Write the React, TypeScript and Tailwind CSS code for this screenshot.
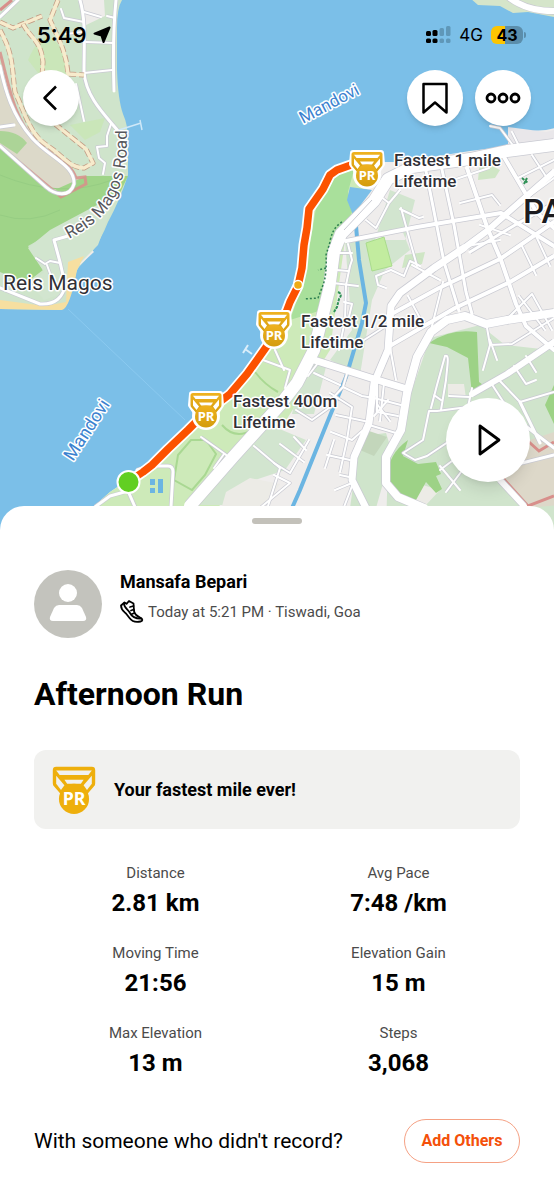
import React from "react";

type Road = { d: string; w: number };

const ROADS: Road[] = [
  // Reis Magos side
  { d: "M80 0 C86 20 84 45 84 72 C86 98 106 116 119 132", w: 3 },
  { d: "M116 0 C113 30 113 60 114 91", w: 3 },
  { d: "M84 73 L112 70", w: 2 },
  { d: "M84 12 L101 17 M84 22 L64 18 L61 9", w: 2 },
  { d: "M86 42 L113 43 M107 16 L115 18 M82 32 L66 34", w: 2 },
  { d: "M76 84 L84 121", w: 2 },
  { d: "M111 124 L107 136 L107 146 L97 147 L99 158 L105 163 L103 174", w: 2 },
  { d: "M68 236 L54 240 L60 262 L65 284 C64 297 55 305 40 304 L0 288", w: 3 },
  { d: "M36 258 L45 264 L50 261 L60 263 M47 265 L52 279", w: 2 },
  { d: "M0 66 C5 90 12 115 32 138 C50 158 75 165 74 184 C70 198 55 195 46 187 L0 146", w: 3 },
  { d: "M0 127 L14 125 M0 17 L18 0", w: 3 },
  // north shore
  { d: "M505 -6 C520 8 538 12 560 11", w: 6 },
  // waterfront
  { d: "M554 145 L507 151 L470 159 L412 167 L388 179 L374 201 L341 234 L334 252 L329 290 L314 350 L297 383 L280 405 L233 457 L190 506", w: 12 },
  { d: "M464 248 L434 268 L400 293 L391 306 L388 350 L374 383 L369 423 L354 457 L352 480 L366 508", w: 7 },
  { d: "M554 313 L507 320 L486 324 L465 316 L447 320 L431 332 L417 357 L407 393 L401 430 L386 457 L386 483 L398 497 L424 508", w: 8 },
  { d: "M314 360 L374 379 L407 389", w: 7 },
  { d: "M554 342 L507 374 L472 394", w: 6 },
  { d: "M472 388 L468 407 L437 411 L429 411 L423 440 L403 453 L415 460 L427 456 L448 442", w: 2 },
  { d: "M346 241 L417 227 L501 213 L554 246", w: 4 },
  { d: "M467 168 L487 227 L501 260 L516 304 L526 326 L554 350", w: 4 },
  { d: "M504 157 L537 213 L554 228", w: 4 },
  { d: "M554 172 L487 231 L464 248", w: 6 },
  { d: "M554 203 L515 225 L470 252", w: 3 },
  { d: "M554 222 L500 259 L439 288 L388 316", w: 4 },
  { d: "M554 256 L510 282 L455 308 L388 347", w: 4 },
  { d: "M425 166 L444 262 L459 311", w: 3 },
  { d: "M441 165 L454 225 L466 292 L472 314", w: 3 },
  { d: "M532 155 L547 178 M518 178 L554 160 M528 197 L554 178", w: 2 },
  { d: "M453 180 L489 168 M460 203 L492 195 L500 205", w: 2 },
  { d: "M401 208 L407 230 L417 266 M400 209 L419 218 L423 217", w: 2 },
  { d: "M366 220 L376 228 L389 203 L376 193 M389 203 L400 190", w: 2 },
  { d: "M348 244 L352 260 L350 266 L346 285 L345 320 L339 350", w: 2 },
  { d: "M338 253 L352 253 M336 270 L348 271 M333 283 L358 286 M344 302 L352 304 L347 325", w: 2 },
  { d: "M378 285 L376 276 L391 270 L404 276 L410 261 L420 266 M378 285 L386 288", w: 2 },
  { d: "M408 296 L421 320 M390 347 L396 380 M364 340 L389 324", w: 2 },
  { d: "M412 265 L440 280 M480 225 L510 235 M462 247 L500 240 M443 282 L431 330", w: 2 },
  { d: "M521 244 L536 275 M536 236 L550 266 M519 296 L545 330 M506 320 L532 294 L552 330", w: 2 },
  { d: "M486 322 L490 345 L483 370 M490 345 L512 344 L554 318 M497 360 L490 340", w: 2 },
  { d: "M445 356 C450 354 447 366 446 380 L441 410 M445 356 L437 385 L431 408 M434 395 L441 400", w: 2 },
  { d: "M449 396 L470 397 M499 380 L520 402 L554 392", w: 2 },
  { d: "M514 366 L526 384 L536 380 M526 356 L536 372 M491 383 L506 406", w: 2 },
  { d: "M520 402 L540 443 M505 410 L554 448 M518 464 L554 455", w: 3 },
  { d: "M500 480 L524 506", w: 6 },
  { d: "M440 466 L460 490 M460 455 L440 470 M470 460 L446 492", w: 2 },
  { d: "M348 370 L343 387 L362 396 L374 398 M343 387 L331 400 M314 373 L340 385 M318 363 L308 376", w: 2 },
  { d: "M377 383 L377 412 L398 416 M374 398 L401 405 M384 383 L380 421 M369 425 L396 433", w: 2 },
  { d: "M374 416 L388 400 M377 404 L390 421 M330 393 L352 407 L347 440", w: 2 },
  { d: "M296 410 L312 420 L333 405 M336 415 L369 422 M331 432 L352 440 L362 431", w: 2 },
  { d: "M274 463 L290 473 L309 440 M294 437 L306 450 M280 444 L304 462", w: 2 },
  { d: "M325 468 L334 440 M340 472 L347 440 M327 455 L350 460", w: 2 },
  { d: "M274 475 L290 483 L260 508 M340 475 L354 478 M335 490 L352 483 M344 507 L352 486", w: 2 },
  { d: "M201 437 L225 454 L232 460 M224 454 L214 468", w: 2 },
  { d: "M254 446 L280 468 L268 506", w: 2 },
  { d: "M95 507 L110 496 L128 491 L135 507 M137 470 L150 466 H168 Q173 466 173 472 L171 507", w: 3 },
  { d: "M263 360 L290 370 L285 388 M275 350 L284 370", w: 2 },
  { d: "M512 132 L519 146 M490 126 L500 128 L512 144", w: 2 },
];

const DASHED = [
  "M0 22 L13 28 L42 16",
  "M23 24 C30 38 41 40 43 62 L42 78",
  "M58 0 L50 20 C58 38 66 50 68 74 L84 75",
  "M0 30 C14 55 12 70 15 92 C26 115 30 135 48 146 C63 156 70 168 84 168 L93 163 L86 149 L50 120",
];

const ROUTE =
  "M367 164 L351 165 L337 170 L330 175 L323 189 L309 209 L307 228 L304 245 L302 268 L298 286 L290 302 L284 318 L274 336 L262 353 L247 374 L230 394 L204 414 L188 430 L168 449 L152 465 L143 472 L128 482";

function Medal({ x, y }: { x: number; y: number }) {
  return (
    <g transform={`translate(${x} ${y})`}>
      <g stroke="#fff" strokeWidth="6" strokeLinejoin="round" fill="#fff">
        <path d="M-14 -15 H14 L15 -4 L9 5 H-9 L-15 -4 Z" />
        <circle cx="0" cy="7" r="11" />
      </g>
      <MedalShape />
    </g>
  );
}

function MedalShape({ flat = false }: { flat?: boolean }) {
  const fill = flat ? "#eeaf0c" : "url(#gold)";
  const inner = flat ? "#f1f1ef" : "#fff";
  return (
    <>
      <path
        fill={fill}
        d="M-13 -16 H13 Q15.500 -16 15.500 -13.500 V-4 Q15.500 -2.500 14.500 -1.500 L8 6 H-8 L-14.500 -1.500 Q-15.500 -2.500 -15.500 -4 V-13.500 Q-15.500 -16 -13 -16 Z"
      />
      <g fill={inner}>
        <path d="M-13 -13.300 H13 L10.500 -10 H-10.500 Z" />
        <path d="M-13 -9.500 L-7 -2.500 L-9.500 1 L-13 -3.500 Z" />
        <path d="M13 -9.500 L7 -2.500 L9.500 1 L13 -3.500 Z" />
        <path d="M-7 -6.500 H7 L5 -3.500 H-5 Z" />
      </g>
      <circle cx="0" cy="7.500" r="11" fill={fill} />
      <text
        x="0"
        y="12"
        textAnchor="middle"
        fontSize="13"
        fontWeight="700"
        fill="#fff"
        fontFamily="'Noto Sans', sans-serif"
      >
        PR
      </text>
    </>
  );
}

function MapLabel({ x, y, title }: { x: number; y: number; title: string }) {
  return (
    <text
      x={x}
      y={y}
      fontSize="17"
      fontWeight="500"
      fill="#303036"
      stroke="#fff"
      strokeWidth="3"
      strokeLinejoin="round"
      paintOrder="stroke"
    >
      {title}
      <tspan x={x} dy="21">
        Lifetime
      </tspan>
    </text>
  );
}

function ActivityMap() {
  return (
    <svg
      viewBox="0 0 554 530"
      preserveAspectRatio="xMidYMin slice"
      className="absolute inset-0 size-full font-['Roboto',sans-serif]"
      role="img"
      aria-label="Map of the run along the Mandovi"
    >
      <defs>
        <linearGradient id="gold" x1="0" y1="0" x2="0" y2="1">
          <stop offset="0" stopColor="#efb21f" />
          <stop offset="1" stopColor="#d39c0c" />
        </linearGradient>
        <path id="reisRoad" d="M69 239 C100 223 128 200 127 137 L127 100" />
        <clipPath id="eastLand">
          <path d="M560 127 L546 130 L514 132 L509 146 L470 151 L400 162 L350 162 L336 167 L325 182 L309 200 L304 212 L300 268 L288 300 L272 335 L250 366 L225 392 L204 410 L150 464 L128 480 L110 492 L92 508 L92 530 H560 Z" />
        </clipPath>
      </defs>
      <rect width="554" height="530" fill="#7bbfe8" />

      <path d="M68 309 L185 420" stroke="#8bcaf0" strokeWidth="1" />

      <path
        d="M0 0 H122 Q117 8 117 28 V70 Q118 100 123 114 Q128 125 128 140 V175 Q120 200 108 222 Q98 248 79 267 L73 277 Q69 303 60 310 L0 309 Z"
        fill="#cfe4cb"
      />
      <path d="M80 0 H104 L105 16 L84 26 Z M78 260 L88 245 L94 252 L80 265 Z" fill="#eeecea" />
      <path d="M28 60 Q45 20 62 50 L70 74 L56 96 Z M70 125 L105 118 L100 132 L85 140 Z" fill="#c6e8ad" opacity=".6" />
      <path d="M0 66 L10 100 Q30 138 60 158 Q80 170 76 190 L60 195 L0 146 Z" fill="#dcd9c9" />
      <path d="M0 131 Q18 131 27 143 L17 154 L0 143 Z" fill="#acd497" />
      <path
        d="M0 147 L50 192 L86 176 H128 L118 197 L66 225 L28 246 L43 270 L26 283 L0 272 Z"
        fill="#9fd488"
      />
      <path d="M0 175 Q60 200 112 180 M0 215 Q30 225 60 210" stroke="#96cd83" strokeWidth="1" fill="none" />
      <path d="M50 230 L95 206 L116 196 L98 245 L78 265 L72 290 L44 300 L30 285 L44 272 L28 248 Z" fill="#d2e5cf" />
      <path d="M0 300 L45 306 L66 302 L68 262 L84 256 L77 270 Q70 308 62 310 L0 309 Z" fill="#f6dfa0" />
      <path
        d="M0 52 C10 90 14 118 36 142 C58 160 72 164 76 178 L85 177 L86 184 L61 197 L0 146"
        fill="none"
        stroke="#d88f8b"
        strokeWidth="3"
        opacity=".85"
      />
      <path d="M0 10 L12 0" stroke="#d88f8b" strokeWidth="3" />

      <path d="M470 -2 L478 5 L500 6 L513 13 L528 12 L554 17 V-2 Z" fill="#d5e5ca" />

      <g clipPath="url(#eastLand)">
        <rect x="80" y="120" width="474" height="410" fill="#efedec" />
        <path
          d="M380 160 L340 160 L320 180 L295 215 L290 300 L80 500 V530 H200 L280 430 L330 350 L345 240 Z"
          fill="#cdeab9"
        />
        <path d="M355 166 L340 165 L318 196 L304 280 L290 320 L322 310 L330 262 L352 212 L348 192 Z" fill="#a9e09b" />
        <path d="M372 190 L350 187 L347 200 L353 215 Z" fill="#7bbfe8" />
        <path
          d="M345 240 L352 330 L330 360 L360 375 L372 300 L385 270 L410 250 L402 230 Z M390 190 L415 200 L405 240 L375 240 Z"
          fill="#d2e5cf"
        />
        <path d="M366 243 L384 237 L392 266 L372 271 Z" fill="#c2ec9f" stroke="#a9db8c" />
        <path d="M304 362 L326 367 L314 414 L292 414 Z M240 458 L270 425 L306 440 L285 470 L255 480 L230 505 H200 Z" fill="#d2e5cf" />
        <path d="M222 506 L226 492 L250 478 L280 484 L262 508 Z" fill="#ecebe6" />
        <path d="M362 436 L386 433 L392 452 L376 508 H350 L356 465 Z" fill="#cfe4cb" />
        <path d="M360 450 L366 430 L387 437 L374 456 Z" fill="#c3d6bb" />
        <path
          d="M430 338 L480 325 L505 345 L550 350 H560 V530 H386 L388 460 L402 432 L412 390 Z"
          fill="#d0e4cc"
        />
        <path d="M448 384 H464 L466 398 L448 396 Z M405 480 L440 490 L425 506 L400 500 Z" fill="#ecebe6" />
        <path d="M500 480 L530 440 L560 430 V505 L525 508 Z" fill="#ddd8c9" />
        <path
          d="M429 343 Q450 328 477 332 L479 382 L486 387 L472 394 L468 358 L447 347 Z M408 440 L403 456 L418 464 L436 462 L441 474 L436 476 L442 489 L436 493 L426 482 L416 500 L400 497 L389 486 Q383 458 408 440 Z M554 385 L545 405 L554 424 Z"
          fill="#9dd286"
        />
        <path d="M480 160 L500 170 L495 178 L478 180 Z M405 255 L425 252 L422 264 L402 268 Z" fill="#cfe6c5" />
        <path
          d="M191 440 L206 440 L216 454 L205 475 L192 490 L174 480 L178 455 Z"
          fill="none"
          stroke="#a9d892"
          strokeWidth="2"
        />
        <path d="M222 425 Q235 440 252 430 M255 372 Q265 385 278 392" fill="none" stroke="#a9d892" strokeWidth="2" />
        <path d="M510 425 L539 451 L554 442 M500 475 L528 506 L554 496" fill="none" stroke="#d88f8b" strokeWidth="3" />
      </g>
      <path d="M508 127 L546 132 L554 130 V145 L508 148 Z" fill="#e9e7ea" />
      <path
        d="M356 226 L359 260 L366 303 L362 323 L346 377 L327 423 L300 490 L292 508"
        fill="none"
        stroke="#6bb5e2"
        strokeWidth="4"
      />
      <path d="M150 479 H155 V485 H150 Z M150 488 H155 V493 H150 Z M158 479 H163 V493 H158 Z" fill="#6bb5e2" />

      <g fill="none" strokeLinejoin="round">
        {ROADS.map((r, i) => (
          <path key={i} d={r.d} stroke="#c9cad2" strokeWidth={r.w + 1.4} />
        ))}
        {ROADS.map((r, i) => (
          <path key={i} d={r.d} stroke="#fff" strokeWidth={r.w} strokeLinecap="round" />
        ))}
        {DASHED.map((d) => (
          <g key={d}>
            <path d={d} stroke="#c39c85" strokeWidth="5" strokeDasharray="7 3" />
            <path d={d} stroke="#f7ebcc" strokeWidth="3.500" />
          </g>
        ))}
        <path d="M119 130 L141 123 M140 120 L142 130" stroke="#cfe8f8" strokeWidth="1.500" />
        <path d="M252 354 L245 349 M243 353 L248 345" stroke="#dbeefa" strokeWidth="2" />
        <path d="M372 200 L344 230" stroke="#c9cad2" strokeWidth="1" />
        <path
          d="M342 222 Q332 228 330 242 L326 255 Q327 275 323 285 L318 298 L304 299 M326 268 L318 270"
          stroke="#2f8051"
          strokeWidth="1.500"
          strokeDasharray="2 2"
        />
        <path d="M338 292 Q343 294 339 299 L337 307 L334 312 M522 178 L528 183 M524 184 L527 178" stroke="#2f9156" strokeWidth="2" strokeDasharray="3 1" />
      </g>

      <g fill="none" strokeLinejoin="round" strokeLinecap="round">
        <path d={ROUTE} stroke="#fff" strokeWidth="11" />
        <path d={ROUTE} stroke="#fc5200" strokeWidth="7.500" />
      </g>
      <circle cx="298" cy="285" r="4.500" fill="#f0ab12" stroke="#fff" strokeWidth="1.500" />
      <circle cx="128.500" cy="482" r="11" fill="#62cf22" stroke="#fff" strokeWidth="2" />

      <g stroke="#fff" strokeWidth="3" strokeLinejoin="round" paintOrder="stroke">
        <text fontSize="17" fill="#57575d">
          <textPath href="#reisRoad">Reis Magos Road</textPath>
        </text>
        <text x="3" y="290" fontSize="21" fill="#303036">Reis Magos</text>
        <text x="523" y="223" fontSize="33" fontWeight="500" fill="#1b1b1f">PA</text>
        <text transform="translate(303 124) rotate(-28)" fontSize="17" fill="#3b82cf">Mandovi</text>
        <text transform="translate(73 462) rotate(-57)" fontSize="18" fill="#3b82cf">Mandovi</text>
      </g>

      <Medal x={367} y={168} />
      <Medal x={274} y={328} />
      <Medal x={206} y={409} />
      <MapLabel x={394} y={166} title="Fastest 1 mile" />
      <MapLabel x={301} y={327} title="Fastest 1/2 mile" />
      <MapLabel x={233} y={407} title="Fastest 400m" />
    </svg>
  );
}

function StatusBar() {
  return (
    <div className="flex h-[70px] items-center justify-between pr-7 pl-[37px] font-['Inter',sans-serif] text-black">
      <div className="flex items-center gap-1.5">
        <span className="text-[22px] leading-7 font-semibold">5:49</span>
        <svg width="18" height="18" viewBox="0 0 18 18" aria-hidden="true">
          <path d="M16.500 1.500 L10.500 16 L8.500 9.500 L1.500 7.600 Z" stroke="#000" strokeWidth="2" strokeLinejoin="round" />
        </svg>
      </div>
      <div className="flex items-center gap-2">
        <svg width="25" height="18" viewBox="0 0 25 18" aria-hidden="true">
          <g>
            <rect x="0" y="5" width="5" height="5" rx="1.500" />
            <rect x="6.500" y="4" width="5" height="6" rx="1.500" />
            <rect x="0" y="12.500" width="5" height="4.500" rx="1.500" />
            <rect x="6.500" y="12.500" width="5" height="4.500" rx="1.500" />
          </g>
          <g fill="#5f97b8">
            <rect x="13.500" y="2" width="4.500" height="8" rx="1.500" />
            <rect x="20" y="0" width="4.500" height="10" rx="1.500" />
            <rect x="13.500" y="12.500" width="4.500" height="4.500" rx="1.500" />
            <rect x="20" y="12.500" width="4.500" height="4.500" rx="1.500" />
          </g>
        </svg>
        <span className="text-[17px] leading-6">4G</span>
        <div className="flex items-center">
          <div className="flex h-[18px] w-8 items-center justify-center rounded-md bg-linear-to-r from-[#fdc500] from-45% to-[#5b8eac] to-45% text-[16px] leading-none font-bold">
            43
          </div>
          <div className="ml-px h-1.5 w-0.5 rounded-r bg-[#5b8eac]" />
        </div>
      </div>
    </div>
  );
}

const ROUND = "flex size-14 items-center justify-center rounded-full bg-white shadow-md";

function MapControls() {
  return (
    <div className="flex items-center justify-between px-[23px]">
      <button type="button" aria-label="Back" className={ROUND}>
        <svg width="26" height="28" viewBox="0 0 26 28" fill="none" stroke="#000" strokeWidth="2.500">
          <path d="M18 2.500 L6.500 14 L18 25.500" strokeLinejoin="round" />
        </svg>
      </button>
      <div className="flex gap-3">
        <button type="button" aria-label="Save" className={ROUND}>
          <svg width="28" height="34" viewBox="0 0 28 34" fill="none" stroke="#000" strokeWidth="2.500" strokeLinejoin="round">
            <path d="M2.500 3 H25.500 V31.500 L14 21.500 L2.500 31.500 Z" />
          </svg>
        </button>
        <button type="button" aria-label="More" className={ROUND}>
          <svg width="36" height="14" viewBox="0 0 36 14" fill="none" stroke="#000" strokeWidth="2.800">
            <circle cx="6" cy="7" r="4" />
            <circle cx="18" cy="7" r="4" />
            <circle cx="30" cy="7" r="4" />
          </svg>
        </button>
      </div>
    </div>
  );
}

function ShoeIcon() {
  return (
    <svg width="24" height="24" viewBox="0 0 24 24" fill="none" stroke="#000" strokeWidth="1.800" strokeLinejoin="round" strokeLinecap="round" aria-hidden="true">
      <path d="M1 5.500 L4.500 2.500 L6.500 3.800 L9 1 L13.500 3.500 L14 11 C14.500 14 17 16 20 17.500 C23 19 23 21 20.500 21.500 C16 22.500 12 21.500 9.500 18 L6 13.500 C4 11.500 1 10 1 5.500 Z" />
      <path d="M4 3.500 C4 8 8 9.500 10 13 C12 17 15 18.800 21.500 18.500 M13.500 6 L10 7 M13.800 9.500 L11 10.500 M14.500 13 L12 14" />
    </svg>
  );
}

const STATS = [
  ["Distance", "2.81 km"],
  ["Avg Pace", "7:48 /km"],
  ["Moving Time", "21:56"],
  ["Elevation Gain", "15 m"],
  ["Max Elevation", "13 m"],
  ["Steps", "3,068"],
];

export default function App() {
  return (
    <div className="min-h-screen bg-white font-['Roboto',sans-serif] text-black">
      <header className="relative h-[530px] overflow-hidden">
        <ActivityMap />
        <div className="relative flex h-full flex-col">
          <StatusBar />
          <MapControls />
          <div className="mt-auto flex justify-end pr-6 pb-12">
            <button type="button" aria-label="Play route" className="flex size-[84px] items-center justify-center rounded-full bg-white shadow-lg">
              <svg width="28" height="34" viewBox="0 0 28 34" fill="none" stroke="#000" strokeWidth="2.800" strokeLinejoin="round">
                <path d="M6 3 L25 17 L6 31 Z" />
              </svg>
            </button>
          </div>
        </div>
      </header>

      <main className="relative -mt-6 rounded-t-3xl bg-white px-[34px] pt-3 pb-9">
        <div className="mx-auto h-1.5 w-[50px] rounded-full bg-[#c3c1ba]" />

        <section className="mt-[46px] flex items-center gap-[18px]">
          <svg width="68" height="68" viewBox="0 0 68 68" role="img" aria-label="Mansafa Bepari">
            <circle cx="34" cy="34" r="34" fill="#c3c3bd" />
            <circle cx="34" cy="23" r="9" fill="#fff" />
            <path d="M25 35 H43 Q46 35 48 38 L52 47 Q53 51 49 51 H19 Q15 51 16 47 L20 38 Q22 35 25 35 Z" fill="#fff" />
          </svg>
          <div className="flex h-[68px] flex-1 flex-col">
            <h2 className="text-[18px] leading-6 font-bold">Mansafa Bepari</h2>
            <p className="mt-1 flex items-center gap-1 text-[15px] leading-7 text-[#4b4b4b]">
              <ShoeIcon />
              Today at 5:21 PM · Tiswadi, Goa
            </p>
          </div>
        </section>

        <h1 className="mt-9 text-[32px] leading-10 font-bold">Afternoon Run</h1>

        <section className="mt-9 flex h-[79px] items-center gap-4 rounded-xl bg-[#f1f1ef] px-4">
          <svg width="48" height="52" viewBox="-17 -18 34 38" aria-hidden="true">
            <MedalShape flat />
          </svg>
          <p className="text-[18px] leading-6 font-bold">Your fastest mile ever!</p>
        </section>

        <dl className="mt-8 grid grid-cols-2 gap-y-5 text-center">
          {STATS.map(([label, value]) => (
            <div key={label}>
              <dt className="text-[15px] leading-6 text-[#4b4b4b]">{label}</dt>
              <dd className="text-[24px] leading-9 font-bold">{value}</dd>
            </div>
          ))}
        </dl>

        <section className="mt-[38px] flex items-center justify-between gap-4">
          <p className="text-[21px] leading-7">With someone who didn't record?</p>
          <button type="button" className="h-11 w-[116px] rounded-full border border-[#f5a184] text-[16px] font-bold text-[#f4500a]">
            Add Others
          </button>
        </section>
      </main>
    </div>
  );
}
